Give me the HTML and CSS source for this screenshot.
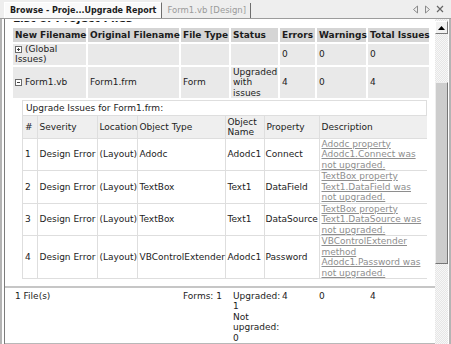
FILE: index.html
```html
<!DOCTYPE html>
<html lang="en">
<head>
  <meta charset="UTF-8">
  <title>Browse - Project Upgrade Report</title>
  <link rel="stylesheet" href="styles.css">
</head>
<body>
  <div class="tabs">
    <div class="tab active">Browse - Proje...Upgrade Report</div>
    <div class="tab">Form1.vb [Design]</div>
    <div class="tab-tools">
      <svg width="7" height="9" viewBox="0 0 7 9"><path d="M5.5 1 L1.5 4.5 L5.5 8 Z" fill="none" stroke="#8a8a8a"/></svg>
      <svg width="7" height="9" viewBox="0 0 7 9"><path d="M1.5 1 L5.5 4.5 L1.5 8 Z" fill="none" stroke="#8a8a8a"/></svg>
      <svg width="8" height="8" viewBox="0 0 8 8"><path d="M1 1 L7 7 M7 1 L1 7" stroke="#666" stroke-width="1.2"/></svg>
    </div>
  </div>

  <div class="window">
    <div class="page">
      <div class="heading"><h3>List of Project Files</h3></div>

      <table class="files">
        <colgroup>
          <col class="c-new"><col class="c-orig"><col class="c-type"><col class="c-status">
          <col class="c-err"><col class="c-warn"><col class="c-total">
        </colgroup>
        <thead>
          <tr>
            <th>New Filename</th>
            <th>Original Filename</th>
            <th>File Type</th>
            <th>Status</th>
            <th>Errors</th>
            <th>Warnings</th>
            <th>Total Issues</th>
          </tr>
        </thead>
        <tbody>
          <tr>
            <td class="name"><span class="toggle plus"></span>(Global<br>Issues)</td>
            <td></td><td></td><td></td>
            <td>0</td><td>0</td><td>0</td>
          </tr>
          <tr>
            <td class="name"><span class="toggle"></span>Form1.vb</td>
            <td>Form1.frm</td>
            <td>Form</td>
            <td>Upgraded with issues</td>
            <td>4</td><td>0</td><td>4</td>
          </tr>
          <tr class="details">
            <td colspan="7">
              <div class="issues">
                <div class="issues-title">Upgrade Issues for Form1.frm:</div>
                <table class="issue-table">
                  <colgroup>
                    <col class="i-num"><col class="i-sev"><col class="i-loc"><col class="i-type">
                    <col class="i-obj"><col class="i-prop"><col class="i-desc">
                  </colgroup>
                  <thead>
                    <tr>
                      <th>#</th><th>Severity</th><th>Location</th><th>Object Type</th>
                      <th>Object Name</th><th>Property</th><th>Description</th>
                    </tr>
                  </thead>
                  <tbody>
                    <tr>
                      <td>1</td><td>Design Error</td><td>(Layout)</td><td>Adodc</td>
                      <td>Adodc1</td><td>Connect</td>
                      <td><a href="#">Adodc property Adodc1.Connect was not upgraded.</a></td>
                    </tr>
                    <tr>
                      <td>2</td><td>Design Error</td><td>(Layout)</td><td>TextBox</td>
                      <td>Text1</td><td>DataField</td>
                      <td><a href="#">TextBox property Text1.DataField was not upgraded.</a></td>
                    </tr>
                    <tr>
                      <td>3</td><td>Design Error</td><td>(Layout)</td><td>TextBox</td>
                      <td>Text1</td><td>DataSource</td>
                      <td><a href="#">TextBox property Text1.DataSource was not upgraded.</a></td>
                    </tr>
                    <tr>
                      <td>4</td><td>Design Error</td><td>(Layout)</td><td>VBControlExtender</td>
                      <td>Adodc1</td><td>Password</td>
                      <td><a href="#">VBControlExtender method Adodc1.Password was not upgraded.</a></td>
                    </tr>
                  </tbody>
                </table>
              </div>
            </td>
          </tr>
        </tbody>
      </table>

      <div class="summary">
        <table class="files totals">
          <colgroup>
            <col class="c-new"><col class="c-orig"><col class="c-type"><col class="c-status">
            <col class="c-err"><col class="c-warn"><col class="c-total">
          </colgroup>
          <tr>
            <td>1 File(s)</td>
            <td></td>
            <td>Forms: 1</td>
            <td>Upgraded:<br>1<br>Not<br>upgraded:<br>0</td>
            <td>4</td>
            <td>0</td>
            <td>4</td>
          </tr>
        </table>
      </div>
    </div>

    <div class="scrollbar">
      <div class="sb-btn">
        <svg width="7" height="4" viewBox="0 0 7 4"><path d="M0 4 L3.5 0 L7 4 Z" fill="#000"/></svg>
      </div>
      <div class="sb-gap"></div>
      <div class="sb-thumb"></div>
      <div class="sb-rest"></div>
    </div>
  </div>
</body>
</html>
```

FILE: styles.css
```css
body {
  margin: 0;
  width: 451px;
  height: 344px;
  overflow: hidden;
  background: #fff;
  font-family: "DejaVu Sans", Verdana, sans-serif;
  font-size: 9px;
  line-height: 10.5px;
  color: #1c1c1c;
}
.tabs {
  display: flex;
  align-items: flex-end;
  height: 19px;
  box-sizing: border-box;
  padding-left: 4px;
  background: #eeeeee;
  border-bottom: 1px solid #9c9c9c;
}
.tab {
  height: 15px;
  line-height: 15px;
  padding: 0 4px 0 5px;
  font-size: 8.5px;
  color: #9a9a9a;
  border-right: 1px solid #6e6e6e;
}
.tab.active {
  padding: 0 5px;
  background: #fafafa;
  color: #1c1c1c;
  font-size: 8px;
  font-weight: bold;
  border-left: 1px solid #fff;
  border-top: 1px solid #fff;
}
.tab-tools {
  margin-left: auto;
  align-self: center;
  display: flex;
  align-items: center;
  gap: 5px;
  padding-right: 7px;
}
.window {
  display: flex;
  height: 325px;
  border-left: 2px solid #b4b4b4;
  border-right: 2px solid #b4b4b4;
  padding: 0 1px 0 2px;
}
.page {
  flex: 1;
  overflow: hidden;
  border-left: 1px solid #7c7c7c;
  padding-left: 6px;
}
/* the report is scrolled: only the bottom of the heading shows */
.heading {
  height: 5px;
  margin: 2px 0 0 2px;
  overflow: hidden;
  display: flex;
  align-items: flex-end;
}
.heading h3 {
  margin: 0;
  font-size: 11px;
  line-height: 13px;
  padding-bottom: 1px;
}
.files {
  table-layout: fixed;
  width: 420px;
  border-collapse: separate;
  border-spacing: 2px;
}
.c-new { width: 73px; }
.c-orig { width: 91px; }
.c-type { width: 48px; }
.c-status { width: 47px; }
.c-err { width: 35px; }
.c-warn { width: 49px; }
.c-total { width: 61px; }
.files > thead > tr > th {
  background: #d5d5d5;
  text-align: left;
  font-weight: bold;
  padding: 1.5px 2px;
  white-space: nowrap;
}
.files > tbody > tr > td,
.files > tr > td {
  background: #e9e9e9;
  padding: 0 2px;
  vertical-align: middle;
}
.toggle {
  display: inline-block;
  width: 7px;
  height: 7px;
  margin-right: 3px;
  border: 1px solid #6a6a6a;
  box-sizing: border-box;
  background: linear-gradient(#444, #444) center / 3px 1px no-repeat, #fff;
  vertical-align: -1px;
}
.toggle.plus {
  background: linear-gradient(#444, #444) center / 3px 1px no-repeat,
              linear-gradient(#444, #444) center / 1px 3px no-repeat, #fff;
}
.files > tbody > tr.details > td {
  background: #fff;
  padding: 0 2px 4px 9px;
}
.issues {
  border: 1px solid #dedede;
}
.issues-title {
  padding: 2px 3px 1px;
  line-height: 11px;
}
.issue-table {
  table-layout: fixed;
  width: 404px;
  border-collapse: collapse;
}
.i-num { width: 14px; }
.i-sev { width: 60px; }
.i-loc { width: 40px; }
.i-type { width: 88px; }
.i-obj { width: 39px; }
.i-prop { width: 55px; }
.i-desc { width: 108px; }
.issue-table th,
.issue-table td {
  border-top: 1px solid #dedede;
  border-right: 1px solid #dedede;
  padding: 0 2px;
  text-align: left;
  vertical-align: middle;
  white-space: nowrap;
}
.issue-table th {
  background: #efefef;
  font-weight: normal;
  white-space: normal;
  padding-top: 0.5px;
}
.issue-table th:last-child,
.issue-table td:last-child {
  border-right: none;
  white-space: normal;
}
.issue-table td {
  background: #fff;
}
.issue-table td:nth-child(6) {
  padding-left: 1px;
}
.issue-table a {
  color: #8e8e8e;
}
.summary {
  margin-top: 1px;
  border-top: 2px solid #c6c6c6;
  border-bottom: 1px solid #b8b8b8;
  margin-left: -6px;
  padding-left: 6px;
}
.files.totals > tr > td,
.files.totals > tbody > tr > td {
  background: #fff;
  vertical-align: top;
  padding-top: 3px;
  line-height: 10.4px;
}
.files.totals {
  border-spacing: 2px 0;
}
.scrollbar {
  width: 13px;
  display: flex;
  flex-direction: column;
  padding-top: 2px;
  background: repeating-conic-gradient(#e6e6e6 0 25%, #f7f7f7 0 50%) 0 0 / 2px 2px;
}
.sb-btn {
  height: 13px;
  display: flex;
  align-items: center;
  justify-content: center;
  background: #f2f2f2;
  border: 1px solid;
  border-color: #fff #7a7a7a #7a7a7a #fff;
  box-sizing: border-box;
}
.sb-gap {
  height: 48px;
}
.sb-thumb {
  height: 182px;
  background: #cdcdcd;
  border: 1px solid;
  border-color: #eee #767676 #767676 #eee;
  box-sizing: border-box;
}
.sb-rest {
  flex: 1;
}
```
